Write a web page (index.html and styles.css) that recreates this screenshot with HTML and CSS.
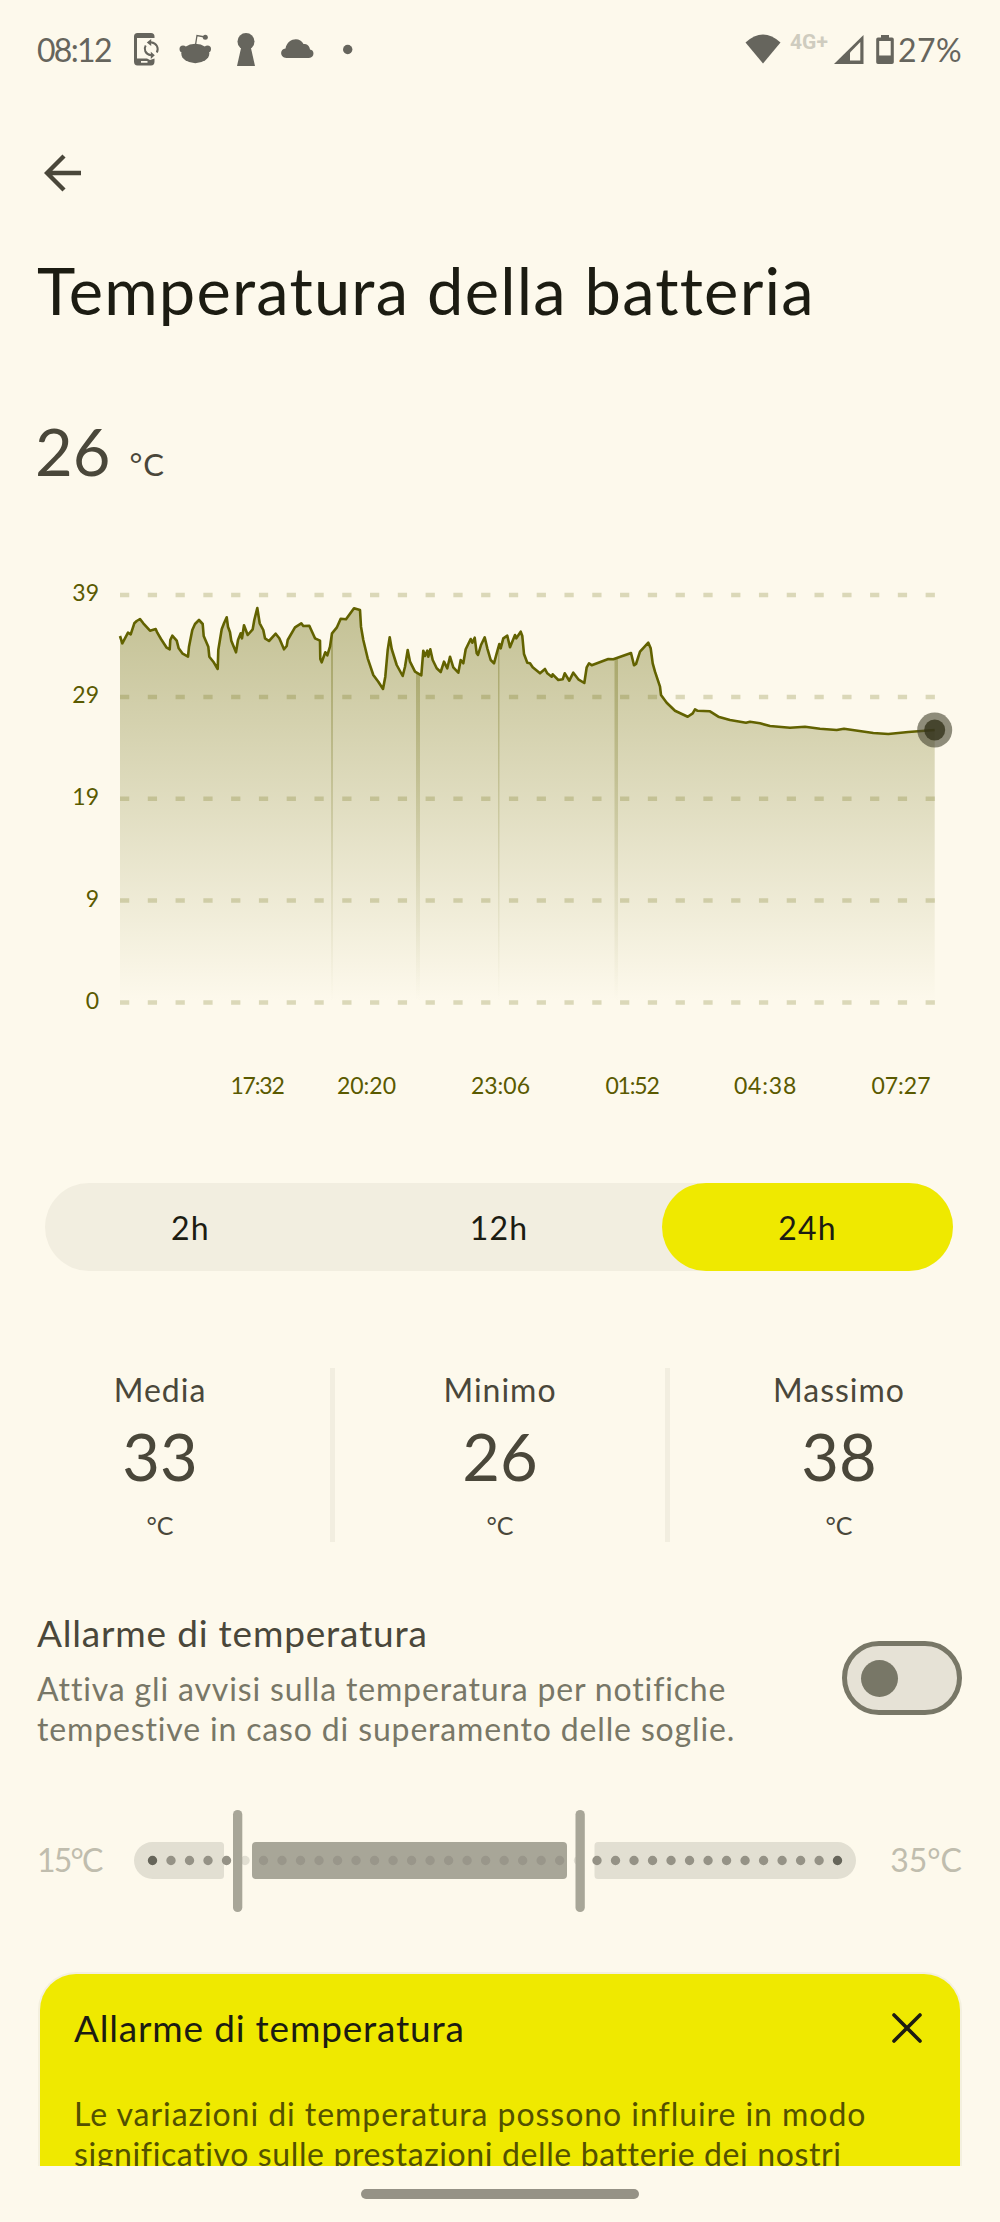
FILE: index.html
```html
<!DOCTYPE html>
<html lang="it">
<head>
  <meta charset="UTF-8">
  <meta name="viewport" content="width=device-width, initial-scale=1.0">
  <title>Temperatura della batteria</title>
  <link rel="stylesheet" href="styles.css">
</head>
<body>
<div class="screen">
  <header class="status-bar">
    <span class="clock">08:12</span>
    <div class="status-icons">
      <!-- phone sync -->
      <svg width="34" height="34" viewBox="0 0 34 34">
        <path fill="currentColor" fill-rule="evenodd" d="M10.500 1h13.500q3.500 0 3.500 3.500V6H10v20.500h10l3 1.500 4.500-1.500v3q0 4-3.500 4H10.500q-3.500 0-3.500-4v-25Q7 1 10.500 1zM14 29v1.800h6.500V29z"/>
        <path fill="none" stroke="currentColor" stroke-width="2" d="M18.700 13.500C16.500 17 18 22 24 23.200M24 10.200c6 1 8 6 5.800 10.300"/>
        <path fill="currentColor" d="M24.200 7v7l-4.400-3.600zM23.800 19.800V27l4-3.700z"/>
      </svg>
      <!-- reddit -->
      <svg width="34" height="34" viewBox="0 0 34 34">
        <ellipse cx="17.300" cy="21.500" rx="14" ry="9.700" fill="currentColor"/>
        <circle cx="5" cy="17" r="3.500" fill="currentColor"/>
        <circle cx="29.500" cy="17" r="3.500" fill="currentColor"/>
        <path d="M17.500 13l1.500-9.500 8 1.500" fill="none" stroke="currentColor" stroke-width="1.300"/>
        <circle cx="27.300" cy="5.300" r="2.500" fill="currentColor"/>
      </svg>
      <!-- keyhole -->
      <svg width="34" height="34" viewBox="0 0 34 34">
        <circle cx="17" cy="9.500" r="8.500" fill="currentColor"/>
        <path d="M12.500 14h9L26 34H8z" fill="currentColor"/>
      </svg>
      <!-- cloud -->
      <svg width="34" height="34" viewBox="0 0 34 34">
        <path d="M6.500 26C-.5 25.500-.5 17 5.500 16.500c2-10.500 14.500-12 18-4.500 4 0 6 2 6.500 5.500 5 .5 4.500 8.500-1 8.500z" fill="currentColor"/>
      </svg>
      <svg width="34" height="34" viewBox="0 0 34 34">
        <circle cx="16.700" cy="17.500" r="4.700" fill="currentColor"/>
      </svg>
    </div>
    <div class="status-right">
      <svg width="36" height="32" viewBox="0 0 36 32">
        <path d="M.5 9.500Q18-6.500 35.500 9.500L18 30.500z" fill="currentColor"/>
      </svg>
      <span class="network">4G+</span>
      <svg class="signal" width="30" height="32" viewBox="0 0 30 32">
        <path d="M29.500 2v29H0z" fill="currentColor"/>
        <path d="M26.300 9v18.500H16V19.500z" class="hole"/>
      </svg>
      <svg class="battery" width="18" height="32" viewBox="0 0 18 32">
        <path fill="currentColor" fill-rule="evenodd" d="M5 2h8v2.500h3q1.800 0 1.800 1.800v23q0 1.700-1.800 1.700H2q-1.800 0-1.800-1.700v-23Q.2 4.500 2 4.500h3zM3.200 8v14.500h11.500V8z"/>
      </svg>
      <span class="percent">27%</span>
    </div>
  </header>

  <main class="content">
    <div class="app-bar">
      <svg width="38" height="38" viewBox="0 0 38 38">
        <path d="M37 19H4M20 2L3 19l17 17" fill="none" stroke="currentColor" stroke-width="4.400"/>
      </svg>
    </div>
    <h1 class="title">Temperatura della batteria</h1>

    <div class="reading">
      <span class="reading-value">26</span>
      <span class="reading-unit">°C</span>
    </div>

    <svg class="chart" width="1000" height="620" viewBox="0 490 1000 620">
      <defs>
        <linearGradient id="fill" gradientUnits="userSpaceOnUse" x1="0" y1="608" x2="0" y2="1002">
          <stop offset="0" stop-color="#626200" stop-opacity=".37"/>
          <stop offset="1" stop-color="#626200" stop-opacity="0"/>
        </linearGradient>
      </defs>
      <path class="grid-lines" d="M120 595H935M120 697H935M120 798.700H935M120 900.600H935M120 1002.500H935"/>
      <path id="area" fill="url(#fill)"/>
      <g fill="url(#fill)">
        <rect x="331" y="634" width="2" height="368"/>
        <rect x="416" y="673" width="4" height="329"/>
        <rect x="498" y="648" width="1.500" height="354"/>
        <rect x="614.500" y="659" width="3.500" height="343"/>
      </g>
      <path id="curve" class="curve"/>
      <circle cx="934.700" cy="730" r="17.500" fill="#45432f" fill-opacity=".6"/>
      <circle cx="934.700" cy="730" r="10.500" fill="#35331c" fill-opacity=".8"/>
      <g class="axis axis-y">
        <text x="99" y="601">39</text>
        <text x="99" y="703">29</text>
        <text x="99" y="805">19</text>
        <text x="99" y="907">9</text>
        <text x="99" y="1008.500">0</text>
      </g>
      <g class="axis axis-x">
        <text class="narrow" x="257" y="1094">17:32</text>
        <text x="366.500" y="1094">20:20</text>
        <text x="500.500" y="1094">23:06</text>
        <text class="narrow" x="632" y="1094">01:52</text>
        <text class="wide" x="765.500" y="1094">04:38</text>
        <text x="901" y="1094">07:27</text>
      </g>
    </svg>

    <div class="range-tabs">
      <div class="tab">2h</div>
      <div class="tab">12h</div>
      <div class="tab active">24h</div>
    </div>

    <div class="stats">
      <div class="stat">
        <div class="stat-label">Media</div>
        <div class="stat-value">33</div>
        <div class="stat-unit">°C</div>
      </div>
      <div class="stat">
        <div class="stat-label">Minimo</div>
        <div class="stat-value">26</div>
        <div class="stat-unit">°C</div>
      </div>
      <div class="stat">
        <div class="stat-label">Massimo</div>
        <div class="stat-value">38</div>
        <div class="stat-unit">°C</div>
      </div>
    </div>

    <div class="alarm">
      <div class="alarm-text">
        <h2 class="alarm-title">Allarme di temperatura</h2>
        <p class="alarm-desc">Attiva gli avvisi sulla temperatura per notifiche<br>tempestive in caso di superamento delle soglie.</p>
      </div>
      <div class="switch"><div class="knob"></div></div>
    </div>

    <div class="slider">
      <span class="limit limit-min">15°C</span>
      <svg width="724" height="102" viewBox="133 1810 724 102">
        <path d="M152.500 1842H220.500q3.500 0 3.500 3.500v30q0 3.500-3.500 3.500H152.500a18.500 18.500 0 0 1 0-37z" fill="#e2dfd2"/>
        <rect x="252" y="1842" width="315" height="37" rx="4" fill="#a8a698"/>
        <path d="M598 1842H837.500a18.500 18.500 0 0 1 0 37H598q-3.500 0-3.500-3.500v-30q0-3.500 3.500-3.500z" fill="#e2dfd2"/>
        <g class="dots">
          <path d="M171 1860.500H227" stroke="#959286"/>
          <path d="M245 1860.500H246" stroke="#e2dfd2"/>
          <path d="M263.500 1860.500H560" stroke="#99968a"/>
          <path d="M578.500 1860.500H579" stroke="#e2dfd2"/>
          <path d="M597 1860.500H820" stroke="#959286"/>
          <path d="M152.500 1860.500h.1M837.500 1860.500h.1" stroke="#66655a"/>
        </g>
        <rect x="233" y="1810" width="9.300" height="102" rx="4.600" fill="#a8a698"/>
        <rect x="575.500" y="1810" width="9.300" height="102" rx="4.600" fill="#a8a698"/>
      </svg>
      <span class="limit limit-max">35°C</span>
    </div>

    <section class="card">
      <div class="card-head">
        <h2 class="card-title">Allarme di temperatura</h2>
        <svg width="30" height="30" viewBox="0 0 30 30">
          <path d="M2 2l26 26M28 2L2 28" fill="none" stroke="currentColor" stroke-width="3.600" stroke-linecap="round"/>
        </svg>
      </div>
      <p class="card-text"><span class="card-line">Le variazioni di temperatura possono influire in modo</span><br>significativo sulle prestazioni delle batterie dei nostri</p>
    </section>
  </main>

  <footer class="nav-bar"><div class="home-pill"></div></footer>
</div>

<script>
  // temperature samples of the last 24h, in chart coordinates
  const points = `120 636 122.3 643.3 128 632.7 130.7 634.3 134.3 623.3 136.7 621 140 619 143.3 623.3
    150 630.7 155.7 629 157.3 632.7 161 639 166.7 647.7 169.7 649.3 170.3 640 172.3 635.7 176.7 640.7
    178.7 648.3 182.7 653.7 188 656.7 189 646.7 192.3 630 195 624 199 620 202.7 624 203.7 636 208.3 646.7
    209.3 656.7 213.3 661.7 217.7 669 218.3 650 221.7 629.3 224 623.3 226.7 617.3 228 626.7 230 632.3
    231.3 640.7 236 652.3 238 640 240.7 633.3 242 638.3 244 625.3 247.7 635 252.7 629.3 254.3 620
    257.3 608 259.7 623.3 263.3 630 265 638.3 269 641 275.7 633.7 279.3 638.3 284 649.3 286.7 646
    287.7 640 295 627.3 301.3 623.3 303.3 626 309.3 625.7 315 638.3 320 640.7 320.3 659 321.7 662.3
    325.3 652.3 327.3 655.3 330 646.7 332 633.3 336.7 627.7 340.7 618.7 346 619.3 354 608.3 360 610
    361 626.7 363.3 640 367.7 658.3 373.3 675 378.3 681.7 383 689 385.3 676.7 387.7 650 389.7 637.3
    391.7 649 396.7 665 402.7 676 405 666.7 407.7 650 410 661.7 415 671.7 421.3 675.3 423.3 650.7
    425 656 427.3 650.7 428.3 656.7 430.3 649.3 432.7 660 436.7 668.3 440.7 672 444 661.7 447.3 668.3
    450 656.7 453.3 667.3 458.3 672.7 460.7 660 463.3 663.3 465.7 649.3 470.7 639 472.3 642.7
    474.7 637.7 476.7 653.3 478 655 481 645 484.7 637.3 487.3 648.3 490.7 660 494 663.3 496.7 653.3
    499.3 644 500.7 648.3 503.3 638.3 507.3 635.7 510 647.3 515 635 516.3 638.3 520.7 631.7 522.3 636
    524 654 527.3 662.7 530 663.3 532.7 667.3 540 673.3 545 669 547.3 673.3 551.7 676.7 552.7 674.3
    558.3 680 562.7 679.3 564.7 673.3 569.3 680.7 573.3 672.7 578.3 679.3 584.3 683 586.7 667.3
    589 663.3 591.7 665.3 608.3 659 613.3 659.3 631 653 634 665.3 636 664 640 651.7 648.3 642.7
    650.7 648.3 652.7 663.3 655 671.7 660 686.7 661 695 666.7 702.7 675 710.7 687.7 716.7 692.7 713.3
    695 709.3 697.3 710.7 710 711.3 718.3 716.7 730 720 746 722.7 750 721.7 760 723.3 770 726
    790 727.7 805 726.7 820 728.7 836.7 730 844 728.7 873.3 733 888.3 734 908.3 732 934.7 730`;

  document.getElementById('curve').setAttribute('d', 'M' + points);
  document.getElementById('area').setAttribute('d', 'M' + points + 'V1002H120z');
</script>
</body>
</html>
```
FILE: styles.css
```css
:root {
  --bg: #fdf9ec;
  --text: #1c1c12;
  --muted: #4a473a;
  --soft: #787767;
  --accent: #efe900;
  --olive: #626200;
}

* {
  box-sizing: border-box;
}

body {
  margin: 0;
  background: var(--bg);
  color: var(--muted);
  font-family: Lato, "Open Sans", sans-serif;
  font-variant-ligatures: none;
}

h1, h2, p {
  margin: 0;
  font-weight: 400;
}

svg {
  display: block;
  flex: none;
}

.screen {
  width: 1000px;
  height: 2222px;
  display: flex;
  flex-direction: column;
  overflow: hidden;
}

.status-bar {
  flex: none;
  height: 98px;
  padding: 0 38px 0 37px;
  display: flex;
  align-items: center;
  color: #66655d;
  font-size: 32px;
}

.clock {
  width: 90px;
  letter-spacing: -1.7px;
}

.status-icons {
  display: flex;
  gap: 17px;
}

.status-right {
  margin-left: auto;
  display: flex;
  align-items: center;
}

.network {
  width: 46px;
  padding-left: 9px;
  margin-bottom: 14px;
  font-family: Roboto, sans-serif;
  font-size: 21px;
  font-weight: 700;
  line-height: 24px;
  color: #cfccbf;
}

.signal {
  margin-left: 7px;
}

.hole {
  fill: var(--bg);
}

.battery {
  margin-left: 12px;
}

.percent {
  margin-left: 4px;
  letter-spacing: 0.4px;
}

.content {
  height: 2068px;
  overflow: hidden;
}

.app-bar {
  height: 152px;
  padding: 56px 0 0 44px;
}

.title {
  padding-left: 37px;
  font-size: 65px;
  line-height: 80px;
  letter-spacing: 1.2px;
  color: var(--text);
  white-space: nowrap;
}

.reading {
  margin-top: 81px;
  padding-left: 35px;
  height: 80px;
  line-height: 80px;
  display: flex;
  align-items: baseline;
  gap: 19px;
}

.reading-value {
  font-size: 65px;
}

.reading-unit {
  font-size: 31px;
  letter-spacing: 1px;
}

.chart {
  margin-top: -1px;
}

.grid-lines {
  fill: none;
  stroke: var(--olive);
  stroke-opacity: .22;
  stroke-width: 4.5;
  stroke-dasharray: 9.26 18.52;
}

.curve {
  fill: none;
  stroke: var(--olive);
  stroke-width: 2.6;
  stroke-linejoin: round;
}

.axis {
  fill: #5a5a00;
  font-size: 23px;
}

.axis-y {
  text-anchor: end;
}

.axis-x {
  text-anchor: middle;
}

.narrow {
  letter-spacing: -1.2px;
}

.wide {
  letter-spacing: 0.8px;
}

.range-tabs {
  margin: 73px 47px 0 45px;
  height: 88px;
  display: flex;
  justify-content: space-between;
  border-radius: 44px;
  background: #f2eee0;
}

.tab {
  width: 291px;
  line-height: 89px;
  border-radius: 44px;
  text-align: center;
  font-size: 32px;
  letter-spacing: 1.2px;
  color: var(--text);
}

.tab.active {
  background: var(--accent);
}

.stats {
  margin-top: 97px;
  height: 174px;
  display: grid;
  grid-template-columns: 335px 335px 330px;
  text-align: center;
}

.stat {
  padding-top: 2px;
  border-right: 5px solid #f2eee0;
}

.stat:first-child {
  padding-right: 10px;
}

.stat:last-child {
  padding-left: 8px;
  border-right: none;
}

.stat-label {
  font-size: 32px;
  line-height: 40px;
  letter-spacing: 1px;
}

.stat-value {
  margin-top: 7px;
  font-size: 65px;
  line-height: 78px;
}

.stat-unit {
  margin-top: 15px;
  font-size: 25px;
  line-height: 30px;
}

.alarm {
  margin-top: 68px;
  padding: 0 38px 0 37px;
  display: flex;
  align-items: center;
  justify-content: space-between;
}

.alarm-title, .card-title {
  font-size: 37px;
  line-height: 46px;
  letter-spacing: 0.8px;
  white-space: nowrap;
}

.alarm-desc {
  margin-top: 13px;
  font-size: 32px;
  line-height: 40px;
  letter-spacing: 0.85px;
  color: var(--soft);
  white-space: nowrap;
}

.switch {
  width: 120px;
  height: 74px;
  margin-bottom: 3px;
  padding: 13.5px 14px;
  border: 5px solid var(--soft);
  border-radius: 37px;
  background: #e6e2d6;
}

.knob {
  width: 37px;
  height: 37px;
  border-radius: 50%;
  background: var(--soft);
}

.slider {
  margin-top: 61px;
  height: 102px;
  padding: 0 38px 0 37px;
  display: flex;
  align-items: center;
}

.limit {
  font-size: 32px;
  line-height: 38px;
  margin-bottom: 3px;
  color: #c0bdae;
}

.limit-min {
  width: 96px;
  letter-spacing: -1.8px;
}

.limit-max {
  margin-left: auto;
}

.dots {
  fill: none;
  stroke-width: 9.4;
  stroke-linecap: round;
  stroke-dasharray: 0 18.51;
}

.card {
  margin: 62px 40px 0;
  height: 300px;
  padding: 31px 38px 0 34px;
  border-radius: 36px;
  background: var(--accent);
  box-shadow: 0 0 0 2px #f4f0df;
}

.card-head {
  display: flex;
  justify-content: space-between;
  align-items: center;
  color: var(--text);
}

.card-text {
  margin-top: 43px;
  font-size: 32px;
  line-height: 40px;
  letter-spacing: 0.62px;
  color: #535100;
  white-space: nowrap;
}

.card-line {
  letter-spacing: 0.95px;
}

.nav-bar {
  flex: none;
  height: 56px;
  display: flex;
  justify-content: center;
  padding-top: 23px;
}

.home-pill {
  width: 278px;
  height: 10px;
  border-radius: 5px;
  background: #959286;
}
```
